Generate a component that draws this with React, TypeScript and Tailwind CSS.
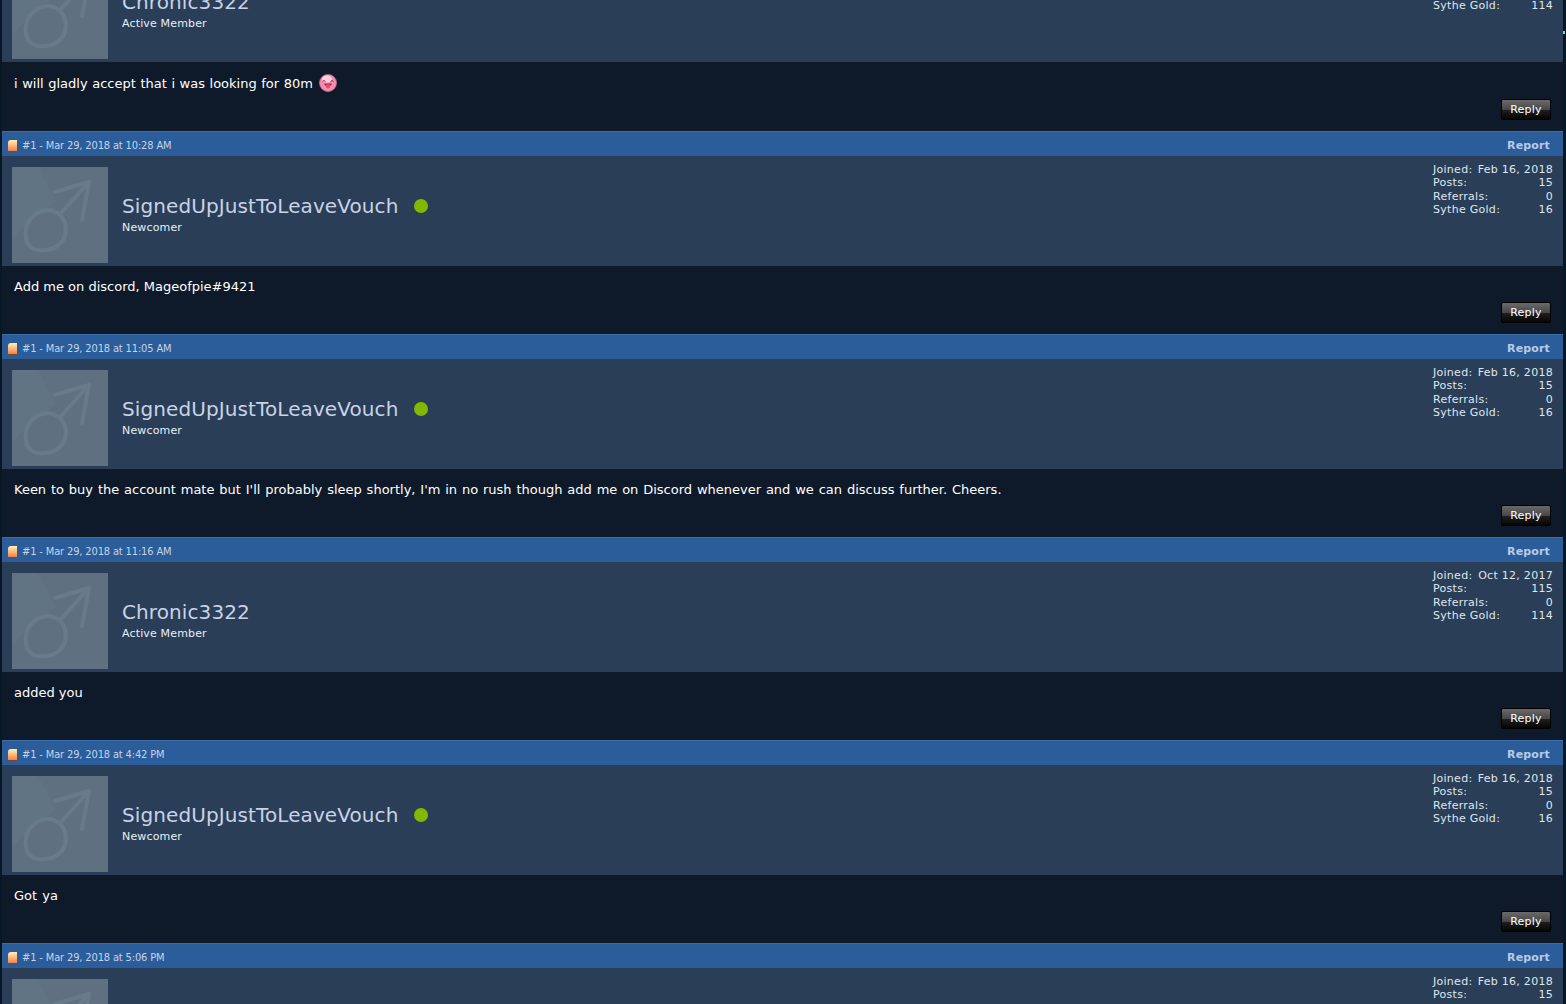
const posts = [
  { date: "Mar 29, 2018 at 9:58 AM", user: "chronic", text: "i will gladly accept that i was looking for 80m", smiley: true, spacing: "[word-spacing:0.45px]" },
  { date: "Mar 29, 2018 at 10:28 AM", user: "signed", text: "Add me on discord, Mageofpie#9421", spacing: "" },
  { date: "Mar 29, 2018 at 11:05 AM", user: "signed", text: "Keen to buy the account mate but I'll probably sleep shortly, I'm in no rush though add me on Discord whenever and we can discuss further. Cheers.", spacing: "[word-spacing:0.72px]" },
  { date: "Mar 29, 2018 at 11:16 AM", user: "chronic", text: "added you", spacing: "" },
  { date: "Mar 29, 2018 at 4:42 PM", user: "signed", text: "Got ya", spacing: "[word-spacing:1px]" },
  { date: "Mar 29, 2018 at 5:06 PM", user: "signed", text: "", spacing: "" },
];

const users: Record<string, any> = {
  chronic: { name: "Chronic3322", title: "Active Member", joined: "Oct 12, 2017", posts: 115, gold: 114, online: false },
  signed: { name: "SignedUpJustToLeaveVouch", title: "Newcomer", joined: "Feb 16, 2018", posts: 15, gold: 16, online: true },
};

function Avatar() {
  return (
    <div className="w-[96px] h-[96px] shrink-0 bg-[#5f7181]">
      <svg viewBox="0 0 96 96" className="w-full h-full" fill="none" stroke="#687b8b" strokeWidth="4" strokeLinecap="round" strokeLinejoin="round">
        <path d="M0 0H26L44 34 20 52 0 72z" fill="#617484" stroke="none" />
        <path d="M36 43c-8 0-14 4-19 11-4 7-4 15-2 21 3 7 11 9 19 8 9-1 16-6 19-14 2-9 0-17-6-22-3-2-7-4-11-4z" />
        <path d="M50 45 76 16" />
        <path d="M43 25 77 15 70 53" />
      </svg>
    </div>
  );
}

function Smiley() {
  return (
    <svg viewBox="0 0 18 18" className="w-[18px] h-[18px] ml-[6px] -my-1 inline-block align-[0px]">
      <circle cx="9" cy="9" r="8.5" fill="#f58fae" stroke="#c9678a" strokeWidth="0.8" />
      <ellipse cx="8" cy="5" rx="5" ry="3.5" fill="#fcd0dc" />
      <path d="M3.500 7.500q1.500-2 3 0M11.500 7.500q1.500-2 3 0" stroke="#8a3550" fill="none" strokeWidth="1" />
      <path d="M5 9.500h8q-.5 2-2 2.500h-4q-1.500-.5-2-2.500z" fill="#a82c4c" />
      <path d="M7 10.500h4v3q-2 2-4 0z" fill="#e8506c" />
    </svg>
  );
}

function Stats({ u }: { u: any }) {
  return (
    <div className="w-[120px] pt-[7px] text-[11px] leading-[13.25px] tracking-[0.28px] text-[#dfe6ee] [font-family:'DejaVu_Sans',sans-serif]">
      <div className="flex justify-between"><span>Joined:</span><span>{u.joined}</span></div>
      <div className="flex justify-between"><span>Posts:</span><span>{u.posts}</span></div>
      <div className="flex justify-between"><span>Referrals:</span><span>0</span></div>
      <div className="flex justify-between"><span>Sythe Gold:</span><span>{u.gold}</span></div>
    </div>
  );
}

function Post({ post, first }: { post: any; first: boolean }) {
  const u = users[post.user];
  return (
    <div>
      <div className="h-[25px] pt-[3px] flex items-center justify-between pl-[6px] pr-[13px] bg-[#2a5d99] border-t border-[#3b6ea8]">
        <div className="flex items-center">
          <div className="w-[10px] h-[12px] rounded-tl-[3px] rounded-[1px] bg-gradient-to-b from-[#fff3b0] to-[#f0804c] border-r border-b border-[#7a4a20]" />
          <span className="ml-[4px] mt-[1px] text-[11px] tracking-[-0.14px] text-[#c6d4e8] [font-family:'DejaVu_Sans_Condensed','DejaVu_Sans',sans-serif] [font-stretch:condensed]">#1 - {post.date}</span>
        </div>
        <a className="mt-[1px] text-[11px] tracking-[0.15px] font-bold text-[#b9cbe6] [font-family:'DejaVu_Sans',sans-serif]">Report</a>
      </div>
      <div className="h-[110px] flex justify-between bg-[#2a3e58] pl-[10px] pr-[10px]">
        <div className="flex pt-[11px]">
          <Avatar />
          <div className="ml-[14px] pt-[27px]">
            <div className="flex items-center">
              <span className="text-[20px] leading-[24px] tracking-[0.1px] text-[#c8d3e6] [font-family:'DejaVu_Sans',sans-serif]">{u.name}</span>
              {u.online ? <span className="w-[14px] h-[14px] rounded-full bg-[#82b800] ml-[16px]" /> : null}
            </div>
            <div className="mt-[3px] text-[11px] leading-[14px] tracking-[0.15px] text-[#e8eef5] [font-family:'DejaVu_Sans',sans-serif]">{u.title}</div>
          </div>
        </div>
        <Stats u={u} />
      </div>
      <div className={(first ? "h-[69px] pt-[13px]" : "h-[68px] pt-[12px]") + " relative bg-[#0e1a2a] pl-[12px] pr-[15px] text-[13px] leading-[18px] text-white [font-family:'DejaVu_Sans',sans-serif] " + post.spacing}>
        {post.text}
        {post.smiley ? <Smiley /> : null}
        <button className="absolute right-[12px] bottom-[11px] w-[50px] h-[21px] rounded-[2px] border border-black text-[11px] leading-[19px] tracking-[0.2px] text-white bg-[linear-gradient(#6a6a6a_0%,#474747_50%,#1e1e1e_55%,#050505_100%)]">Reply</button>
      </div>
    </div>
  );
}

export default function App() {
  return (
    <div className="relative h-[1004px] overflow-hidden bg-[#061824] pl-[2px] pr-[3px]">
      <div className="-mt-[73px]">
        {posts.map((post, i) => (
          <Post key={i} post={post} first={i === 0} />
        ))}
      </div>
      <div className="absolute right-[1px] top-[31px] w-[2px] h-[3px] bg-[#7fd0e0]" />
    </div>
  );
}
